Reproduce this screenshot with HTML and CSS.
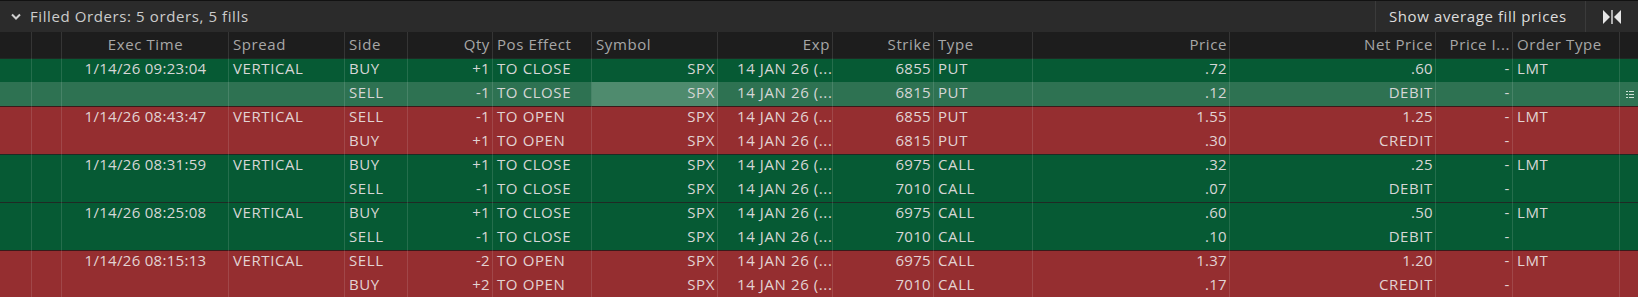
FILE: index.html
```html
<!DOCTYPE html>
<html lang="en">
<head>
  <meta charset="UTF-8">
  <title>Filled Orders</title>
  <link rel="stylesheet" href="styles.css">
</head>
<body>
  <div class="titlebar">
    <svg class="chevron" width="10" height="7" viewBox="0 0 10 7"><polyline points="1,1.5 5,5.5 9,1.5" fill="none" stroke="#d0d0d0" stroke-width="2"/></svg>
    <span class="title">Filled Orders: 5 orders, 5 fills</span>
    <div class="spacer"></div>
    <div class="btn">Show average fill prices</div>
    <div class="icon-btn">
      <svg width="20" height="16" viewBox="0 0 20 16">
        <polygon points="1,1 8,8 1,15" fill="#e6e6e6"/>
        <rect x="9.3" y="1" width="1.4" height="14" fill="#e6e6e6"/>
        <polygon points="19,1 12,8 19,15" fill="#e6e6e6"/>
      </svg>
    </div>
  </div>

  <div class="grid">
    <div class="row head">
      <div class="c"></div><div class="c"></div>
      <div class="c center">Exec Time</div>
      <div class="c">Spread</div>
      <div class="c">Side</div>
      <div class="c right">Qty</div>
      <div class="c">Pos Effect</div>
      <div class="c">Symbol</div>
      <div class="c right">Exp</div>
      <div class="c right">Strike</div>
      <div class="c">Type</div>
      <div class="c right">Price</div>
      <div class="c right">Net Price</div>
      <div class="c right">Price I...</div>
      <div class="c">Order Type</div>
      <div class="c"></div>
    </div>

    <!-- order 1 -->
    <div class="row green first">
      <div class="c"></div><div class="c"></div>
      <div class="c center num">1/14/26 09:23:04</div>
      <div class="c">VERTICAL</div>
      <div class="c">BUY</div>
      <div class="c right num">+1</div>
      <div class="c">TO CLOSE</div>
      <div class="c right">SPX</div>
      <div class="c exp">14 JAN 26 (...</div>
      <div class="c right num">6855</div>
      <div class="c">PUT</div>
      <div class="c right num">.72</div>
      <div class="c right num">.60</div>
      <div class="c right">-</div>
      <div class="c">LMT</div>
      <div class="c"></div>
    </div>
    <div class="row selected">
      <div class="c"></div><div class="c"></div>
      <div class="c center"></div>
      <div class="c"></div>
      <div class="c">SELL</div>
      <div class="c right num">-1</div>
      <div class="c">TO CLOSE</div>
      <div class="c right focus">SPX</div>
      <div class="c exp">14 JAN 26 (...</div>
      <div class="c right num">6815</div>
      <div class="c">PUT</div>
      <div class="c right num">.12</div>
      <div class="c right">DEBIT</div>
      <div class="c right">-</div>
      <div class="c"></div>
      <div class="c menu">
        <svg width="8" height="7" viewBox="0 0 8 7"><rect x="0" y="0" width="2" height="1" fill="#cfe3d8"/><rect x="3" y="0" width="5" height="1" fill="#cfe3d8"/><rect x="0" y="3" width="2" height="1" fill="#cfe3d8"/><rect x="3" y="3" width="5" height="1" fill="#cfe3d8"/><rect x="0" y="6" width="2" height="1" fill="#cfe3d8"/><rect x="3" y="6" width="5" height="1" fill="#cfe3d8"/></svg>
      </div>
    </div>

    <!-- order 2 -->
    <div class="row red first">
      <div class="c"></div><div class="c"></div>
      <div class="c center num">1/14/26 08:43:47</div>
      <div class="c">VERTICAL</div>
      <div class="c">SELL</div>
      <div class="c right num">-1</div>
      <div class="c">TO OPEN</div>
      <div class="c right">SPX</div>
      <div class="c exp">14 JAN 26 (...</div>
      <div class="c right num">6855</div>
      <div class="c">PUT</div>
      <div class="c right num">1.55</div>
      <div class="c right num">1.25</div>
      <div class="c right">-</div>
      <div class="c">LMT</div>
      <div class="c"></div>
    </div>
    <div class="row red">
      <div class="c"></div><div class="c"></div>
      <div class="c center"></div>
      <div class="c"></div>
      <div class="c">BUY</div>
      <div class="c right num">+1</div>
      <div class="c">TO OPEN</div>
      <div class="c right">SPX</div>
      <div class="c exp">14 JAN 26 (...</div>
      <div class="c right num">6815</div>
      <div class="c">PUT</div>
      <div class="c right num">.30</div>
      <div class="c right">CREDIT</div>
      <div class="c right">-</div>
      <div class="c"></div>
      <div class="c"></div>
    </div>

    <!-- order 3 -->
    <div class="row green first">
      <div class="c"></div><div class="c"></div>
      <div class="c center num">1/14/26 08:31:59</div>
      <div class="c">VERTICAL</div>
      <div class="c">BUY</div>
      <div class="c right num">+1</div>
      <div class="c">TO CLOSE</div>
      <div class="c right">SPX</div>
      <div class="c exp">14 JAN 26 (...</div>
      <div class="c right num">6975</div>
      <div class="c">CALL</div>
      <div class="c right num">.32</div>
      <div class="c right num">.25</div>
      <div class="c right">-</div>
      <div class="c">LMT</div>
      <div class="c"></div>
    </div>
    <div class="row green">
      <div class="c"></div><div class="c"></div>
      <div class="c center"></div>
      <div class="c"></div>
      <div class="c">SELL</div>
      <div class="c right num">-1</div>
      <div class="c">TO CLOSE</div>
      <div class="c right">SPX</div>
      <div class="c exp">14 JAN 26 (...</div>
      <div class="c right num">7010</div>
      <div class="c">CALL</div>
      <div class="c right num">.07</div>
      <div class="c right">DEBIT</div>
      <div class="c right">-</div>
      <div class="c"></div>
      <div class="c"></div>
    </div>

    <!-- order 4 -->
    <div class="row green first">
      <div class="c"></div><div class="c"></div>
      <div class="c center num">1/14/26 08:25:08</div>
      <div class="c">VERTICAL</div>
      <div class="c">BUY</div>
      <div class="c right num">+1</div>
      <div class="c">TO CLOSE</div>
      <div class="c right">SPX</div>
      <div class="c exp">14 JAN 26 (...</div>
      <div class="c right num">6975</div>
      <div class="c">CALL</div>
      <div class="c right num">.60</div>
      <div class="c right num">.50</div>
      <div class="c right">-</div>
      <div class="c">LMT</div>
      <div class="c"></div>
    </div>
    <div class="row green">
      <div class="c"></div><div class="c"></div>
      <div class="c center"></div>
      <div class="c"></div>
      <div class="c">SELL</div>
      <div class="c right num">-1</div>
      <div class="c">TO CLOSE</div>
      <div class="c right">SPX</div>
      <div class="c exp">14 JAN 26 (...</div>
      <div class="c right num">7010</div>
      <div class="c">CALL</div>
      <div class="c right num">.10</div>
      <div class="c right">DEBIT</div>
      <div class="c right">-</div>
      <div class="c"></div>
      <div class="c"></div>
    </div>

    <!-- order 5 -->
    <div class="row red first">
      <div class="c"></div><div class="c"></div>
      <div class="c center num">1/14/26 08:15:13</div>
      <div class="c">VERTICAL</div>
      <div class="c">SELL</div>
      <div class="c right num">-2</div>
      <div class="c">TO OPEN</div>
      <div class="c right">SPX</div>
      <div class="c exp">14 JAN 26 (...</div>
      <div class="c right num">6975</div>
      <div class="c">CALL</div>
      <div class="c right num">1.37</div>
      <div class="c right num">1.20</div>
      <div class="c right">-</div>
      <div class="c">LMT</div>
      <div class="c"></div>
    </div>
    <div class="row red">
      <div class="c"></div><div class="c"></div>
      <div class="c center"></div>
      <div class="c"></div>
      <div class="c">BUY</div>
      <div class="c right num">+2</div>
      <div class="c">TO OPEN</div>
      <div class="c right">SPX</div>
      <div class="c exp">14 JAN 26 (...</div>
      <div class="c right num">7010</div>
      <div class="c">CALL</div>
      <div class="c right num">.17</div>
      <div class="c right">CREDIT</div>
      <div class="c right">-</div>
      <div class="c"></div>
      <div class="c"></div>
    </div>
  </div>
</body>
</html>
```

FILE: styles.css
```css
body {
  margin: 0;
  background-color: #1d1d1d;
  font-family: "Open Sans", "Noto Sans", sans-serif;
  font-size: 15px;
  letter-spacing: 0.6px;
  color: #d6d6d6;
  overflow: hidden;
}

.titlebar {
  display: flex;
  align-items: flex-start;
  height: 31px;
  border-top: 1px solid #121212;
  background-color: #2b2b2b;
}

.chevron {
  margin: 12px 9px 0 11px;
}

.title {
  line-height: 30px;
  color: #cccccc;
}

.spacer {
  flex: 1;
}

.btn {
  box-sizing: border-box;
  width: 211px;
  height: 31px;
  line-height: 30px;
  padding-left: 13px;
  border-left: 1px solid #3b3b3b;
  border-right: 1px solid #3b3b3b;
  color: #dddddd;
  white-space: nowrap;
  overflow: hidden;
}

.icon-btn {
  width: 52px;
  height: 31px;
  display: flex;
  align-items: center;
  justify-content: center;
}

.grid {
  display: flex;
  flex-direction: column;
}

.row {
  display: grid;
  grid-template-columns: 32px 30px 167px 116px 63px 85px 99px 126px 115px 101px 99px 197px 206px 77px 107px 18px;
  height: 24px;
  line-height: 20px;
}

.row.head {
  height: 26px;
  line-height: 24px;
  background-color: #1d1d1d;
  color: #a7a7a7;
}

.c {
  box-sizing: border-box;
  padding: 0 3px 0 4px;
  border-right: 1px solid rgba(255, 255, 255, 0.12);
  white-space: nowrap;
  overflow: hidden;
}

.head .c {
  border-right-color: #353535;
}

.c:last-child {
  border-right: none;
}

.center {
  text-align: center;
}

.right {
  text-align: right;
  padding-right: 2px;
}

.num {
  letter-spacing: 0.3px;
}

.exp {
  padding-left: 19px;
}

.green {
  background-color: #065a34;
}

.red {
  background-color: #952e30;
  color: #e2d3d3;
}

.selected {
  background-color: #2e7252;
}

.focus {
  background-color: #4f8b6e;
}

.first {
  box-shadow: inset 0 1px 0 #1f2a24;
}

.red.first {
  box-shadow: inset 0 1px 0 #3a1a1a;
}

.menu {
  display: flex;
  align-items: center;
  justify-content: center;
}
```
